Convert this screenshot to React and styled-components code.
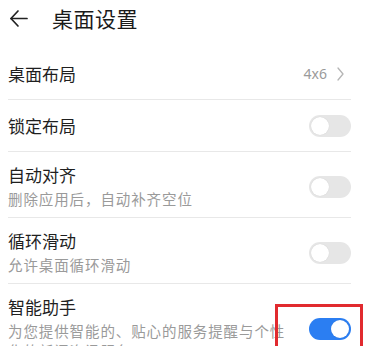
import React from 'react';
import styled, { createGlobalStyle } from 'styled-components';

const GlobalStyle = createGlobalStyle`
    html, body {
        margin: 0;
        padding: 0;
        background: #ffffff;
        overflow: hidden;
    }
    body {
        font-family: "Noto Sans", "Noto Sans CJK SC", sans-serif;
        color: #1f1f1f;
    }
`;

const Page = styled.div`
    width: 375px;
    height: 346px;
    overflow: hidden;
    background: #fff;
`;

const Header = styled.div`
    display: flex;
    align-items: center;
    height: 36px;
    padding-left: 9px;
    margin-bottom: 12px;

    .title{
        margin-left: 24px;
        font-size: 21px;
        letter-spacing: 0.5px;
        color: #1a1a1a;
        font-family: "Noto Sans CJK SC", sans-serif;
    }
`;

const List = styled.div`
    margin: 0 24px 0 8px;
`;

const Row = styled.div`
    position: relative;
    display: flex;
    align-items: center;
    justify-content: space-between;
    min-height: ${props => props.sub ? 'auto' : '52px'};
    padding: ${props => props.sub ? '12px 0 8px' : '0'};
    box-sizing: border-box;
    border-bottom: ${props => props.last ? 'none' : '1px solid #e8e8e8'};
`;

const TextCol = styled.div`
    display: flex;
    flex-direction: column;
    width: 285px;
`;

const Title = styled.div`
    font-family: "Noto Sans CJK SC", sans-serif;
    font-size: 17px;
    line-height: 22px;
    color: #1f1f1f;
`;

const Sub = styled.div`
    font-family: "Noto Sans CJK SC", sans-serif;
    font-size: 14.5px;
    line-height: 20px;
    letter-spacing: 0.9px;
    margin-top: 3px;
    color: #9a9a9a;
`;

const Value = styled.div`
    display: flex;
    align-items: center;
    gap: 10px;
    margin-right: 7px;
    font-size: 14px;
    color: #9a9a9a;
`;

const Switch = styled.div`
    position: relative;
    width: 42px;
    height: 22px;
    border-radius: 11px;
    flex-shrink: 0;
    background: ${props => props.on ? '#2b7ef2' : '#e6e6e6'};

    &::after{
        content: '';
        position: absolute;
        top: 2px;
        left: ${props => props.on ? '22px' : '2px'};
        width: 18px;
        height: 18px;
        border-radius: 50%;
        background: #fff;
        box-shadow: 0 0 1px rgba(0,0,0,0.15);
    }
`;

const Mark = styled.div`
    position: absolute;
    left: 267px;
    top: 20px;
    width: 88px;
    height: 80px;
    border: 3px solid #e12a2f;
    box-sizing: border-box;
    pointer-events: none;
`;

const BackIcon = () => (
    <svg width="19" height="19" viewBox="0 0 19 19" fill="none" stroke="#222" strokeWidth="1.7" strokeLinecap="round" strokeLinejoin="round">
        <line x1="2" y1="9.5" x2="18" y2="9.5" />
        <polyline points="9,2 2,9.5 9,17" />
    </svg>
);

const Chevron = () => (
    <svg width="7" height="14" viewBox="0 0 7 14" fill="none" stroke="#b5b5b5" strokeWidth="1.3" strokeLinecap="round" strokeLinejoin="round">
        <polyline points="1,1 6,7 1,13" />
    </svg>
);

const items = [
    { title: '锁定布局', on: false },
    { title: '自动对齐', sub: '删除应用后，自动补齐空位', on: false },
    { title: '循环滑动', sub: '允许桌面循环滑动', on: false },
];

const App = () => {
    return (
        <Page>
            <GlobalStyle />
            <Header>
                <BackIcon />
                <div className='title'>桌面设置</div>
            </Header>
            <List>
                <Row>
                    <Title>桌面布局</Title>
                    <Value>4x6 <Chevron /></Value>
                </Row>
                {
                    items.map((it) => (
                        <Row key={it.title} sub={it.sub}>
                            <TextCol>
                                <Title>{it.title}</Title>
                                {it.sub && <Sub>{it.sub}</Sub>}
                            </TextCol>
                            <Switch on={it.on} />
                        </Row>
                    ))
                }
                <Row sub last>
                    <TextCol>
                        <Title>智能助手</Title>
                        <Sub>为您提供智能的、贴心的服务提醒与个性化的新闻资讯服务</Sub>
                    </TextCol>
                    <Switch on />
                    <Mark />
                </Row>
            </List>
        </Page>
    );
};

export default App;
